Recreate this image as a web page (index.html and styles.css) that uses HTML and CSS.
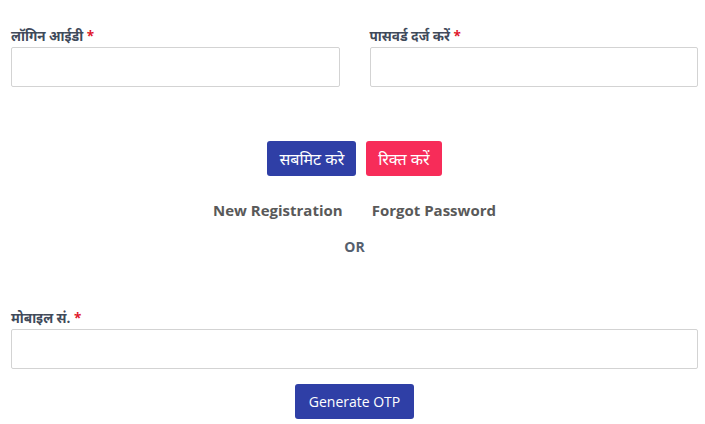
FILE: index.html
```html
<!DOCTYPE html>
<html lang="hi">
<head>
<meta charset="utf-8">
<title>Login</title>
<link rel="stylesheet" href="styles.css">
</head>
<body>
<div class="page">
  <div class="row">
    <div class="field">
      <label class="label">लॉगिन आईडी <span class="req">*</span></label>
      <input class="input" type="text">
    </div>
    <div class="field">
      <label class="label">पासवर्ड दर्ज करें <span class="req">*</span></label>
      <input class="input" type="password">
    </div>
  </div>
  <div class="actions">
    <button class="btn btn-blue btn-hi">सबमिट करे</button>
    <button class="btn btn-red btn-hi">रिक्त करें</button>
  </div>
  <div class="links">
    <a class="link">New Registration</a>
    <a class="link">Forgot Password</a>
  </div>
  <div class="or">OR</div>
  <div class="field mobile">
    <label class="label">मोबाइल सं. <span class="req">*</span></label>
    <input class="input" type="text">
  </div>
  <div class="actions otp">
    <button class="btn btn-blue">Generate OTP</button>
  </div>
</div>
</body>
</html>
```

FILE: styles.css
```css
* { box-sizing: border-box; }
html, body { margin: 0; padding: 0; background: #fff; }
body {
  font-family: "Open Sans", "Noto Sans", "Noto Sans Devanagari", sans-serif;
  color: #3c4858;
}
.page {
  padding: 27px 7px 0 11px;
}
.row {
  display: grid;
  grid-template-columns: 1fr 1fr;
  column-gap: 30px;
}
.field {
  display: flex;
  flex-direction: column;
}
.label {
  font-size: 13.5px;
  font-weight: 700;
  line-height: 18px;
  margin-bottom: 2px;
  color: #3f4a5a;
}
.req { color: #e0182d; }
.input {
  height: 40px;
  border: 1px solid #d3d3d3;
  border-radius: 2px;
  background: #fff;
  width: 100%;
  margin: 0;
}
.actions {
  display: flex;
  justify-content: center;
  gap: 10px;
  margin-top: 54px;
}
.btn {
  height: 35px;
  border: none;
  border-radius: 3px;
  color: #fff;
  font-family: "Open Sans", "Noto Sans", sans-serif;
  font-size: 14px;
  padding: 0 14px;
  cursor: pointer;
}
.btn-hi {
  font-size: 16px;
  padding: 0 12px;
}
.btn-blue { background: #2f3fa6; }
.btn-red { background: #f72c59; }
.links {
  display: flex;
  justify-content: center;
  gap: 29px;
  margin-top: 23px;
}
.link {
  font-size: 15px;
  font-weight: 700;
  color: #595959;
  line-height: 22px;
}
.or {
  text-align: center;
  font-size: 14px;
  font-weight: 700;
  color: #55606e;
  margin-top: 16px;
  line-height: 20px;
}
.mobile { margin-top: 52px; }
.otp { margin-top: 15px; }
```
